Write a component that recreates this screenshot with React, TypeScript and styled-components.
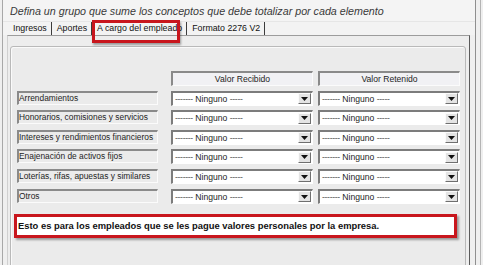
import styled, { createGlobalStyle } from "styled-components";

const GlobalStyle = createGlobalStyle`
  html, body {
    margin: 0;
    padding: 0;
    background: #efefef;
  }
  body {
    font-family: "Liberation Sans", Arial, sans-serif;
    color: #1e1e1e;
  }
`;

const Frame = styled.div`
  width: 481px;
  height: 265px;
  box-sizing: border-box;
  padding-left: 2px;
  border-right: 1px solid #b4b4b4;
  overflow: hidden;
  background: #efefef;
`;

const Window = styled.div`
  width: 474px;
  height: 100%;
  box-sizing: border-box;
  border-left: 1px solid #a8a8a8;
  border-right: 1px solid #8f8f8f;
  display: flex;
  flex-direction: column;
`;

const Description = styled.div`
  height: 22px;
  box-sizing: border-box;
  padding-left: 7px;
  line-height: 22px;
  font-size: 10.7px;
  font-style: italic;
  color: #3a3a3a;
  background: #f4f4f4;
  border-bottom: 1px solid #e6e6e6;
  white-space: nowrap;
`;

const TabStrip = styled.div`
  height: 18px;
  display: flex;
  align-items: center;
  padding-left: 5px;
  background: #f3f3f3;
`;

const Tab = styled.div<{ $active?: boolean }>`
  position: relative;
  height: 13px;
  line-height: 13px;
  padding: 0 ${(p) => (p.$active ? "4px" : "4px")} 0 5px;
  font-size: 8.8px;
  white-space: nowrap;
  border-right: 1px solid #3c3c3c;
  color: #111;

  ${(p) =>
    p.$active &&
    `
    &::after {
      content: "";
      position: absolute;
      left: 0;
      top: -2px;
      width: 82px;
      height: 17px;
      border: 3px solid #c8161d;
      box-shadow: 1px 2px 2px rgba(0, 0, 0, 0.35);
    }
  `}
`;

const TabPane = styled.div`
  flex: 1;
  margin-left: 4px;
  width: 463px;
  box-sizing: border-box;
  border-top: 1px solid #9c9c9c;
  border-left: 1px solid #d0d0d0;
  border-right: 1px solid #5a5a5a;
  padding: 10px 3px 0 2px;
  background: #ededed;
`;

const GroupBox = styled.div`
  width: 456px;
  height: 240px;
  box-sizing: border-box;
  border: 1px solid #b9b9b9;
  border-radius: 3px;
  box-shadow: inset 1px 1px 0 #fafafa;
  background: #ebebeb;
  padding: 24px 0 0 6px;
`;

const Grid = styled.div`
  display: grid;
  grid-template-columns: 149px 142px 142px;
  grid-auto-rows: 15px;
  column-gap: 5px;
  row-gap: 4.6px;
`;

const HeaderCell = styled.div`
  height: 15px;
  box-sizing: border-box;
  border-top: 2px solid #8a8a8a;
  border-left: 2px solid #8a8a8a;
  border-bottom: 1px solid #fbfbfb;
  border-right: 1px solid #fbfbfb;
  background: #f1f1f4;
  font-size: 8.6px;
  line-height: 12px;
  text-align: center;
  color: #1e1e1e;
`;

const Label = styled.div`
  width: 141px;
  height: 14px;
  box-sizing: border-box;
  border-top: 2px solid #8a8a8a;
  border-left: 2px solid #8a8a8a;
  border-bottom: 1px solid #fbfbfb;
  border-right: 1px solid #fbfbfb;
  background: #ebebeb;
  font-size: 8.4px;
  line-height: 10px;
  white-space: nowrap;
  overflow: hidden;
  color: #1e1e1e;
`;

const Combo = styled.div`
  height: 15px;
  box-sizing: border-box;
  display: flex;
  align-items: center;
  border-top: 2px solid #7c7c7c;
  border-left: 2px solid #7c7c7c;
  border-bottom: 1px solid #ffffff;
  border-right: 1px solid #ffffff;
  background: #fff;
  font-size: 8.6px;
  color: #1e1e1e;
`;

const ComboText = styled.span`
  flex: 1;
  padding-left: 2px;
  white-space: nowrap;
  line-height: 12px;
`;

const Dashes = styled.span`
  color: #555;
  letter-spacing: -0.3px;
`;

const DropButton = styled.div`
  width: 13px;
  height: 11px;
  margin-right: 1px;
  box-sizing: border-box;
  background: #e4e4e4;
  border-top: 1px solid #fbfbfb;
  border-left: 1px solid #fbfbfb;
  border-right: 1px solid #6f6f6f;
  border-bottom: 1px solid #6f6f6f;
  display: flex;
  align-items: center;
  justify-content: center;
`;

const Note = styled.div`
  width: 443px;
  height: 24px;
  box-sizing: border-box;
  margin: 10.5px 0 0 -3px;
  border: 3px solid #c8161d;
  box-shadow: 2px 2px 2px rgba(0, 0, 0, 0.35);
  background: #fff;
  padding-left: 1px;
  font-size: 9.4px;
  font-weight: bold;
  line-height: 18px;
  color: #111;
  white-space: nowrap;
`;

const concepts = [
  "Arrendamientos",
  "Honorarios, comisiones y servicios",
  "Intereses y rendimientos financieros",
  "Enajenación de activos fijos",
  "Loterías, rifas, apuestas y similares",
  "Otros",
];

const tabs = ["Ingresos", "Aportes", "A cargo del empleado", "Formato 2276 V2"];

function ComboBox() {
  return (
    <Combo>
      <ComboText>
        <Dashes>-------</Dashes> Ninguno <Dashes>-----</Dashes>
      </ComboText>
      <DropButton>
        <svg width="7" height="4" viewBox="0 0 7 4">
          <path d="M0 0 H7 L3.5 4 Z" fill="#111" />
        </svg>
      </DropButton>
    </Combo>
  );
}

export default function App() {
  return (
    <>
      <GlobalStyle />
      <Frame>
        <Window>
          <Description>
            Defina un grupo que sume los conceptos que debe totalizar por cada elemento
          </Description>
          <TabStrip>
            {tabs.map((t, i) => (
              <Tab key={t} $active={i === 2}>
                {t}
              </Tab>
            ))}
          </TabStrip>
          <TabPane>
            <GroupBox>
              <Grid>
                <div />
                <HeaderCell>Valor Recibido</HeaderCell>
                <HeaderCell>Valor Retenido</HeaderCell>
                {concepts.map((c) => (
                  <>
                    <Label key={c}>{c}</Label>
                    <ComboBox />
                    <ComboBox />
                  </>
                ))}
              </Grid>
              <Note>
                Esto es para los empleados que se les pague valores personales por la empresa.
              </Note>
            </GroupBox>
          </TabPane>
        </Window>
      </Frame>
    </>
  );
}
